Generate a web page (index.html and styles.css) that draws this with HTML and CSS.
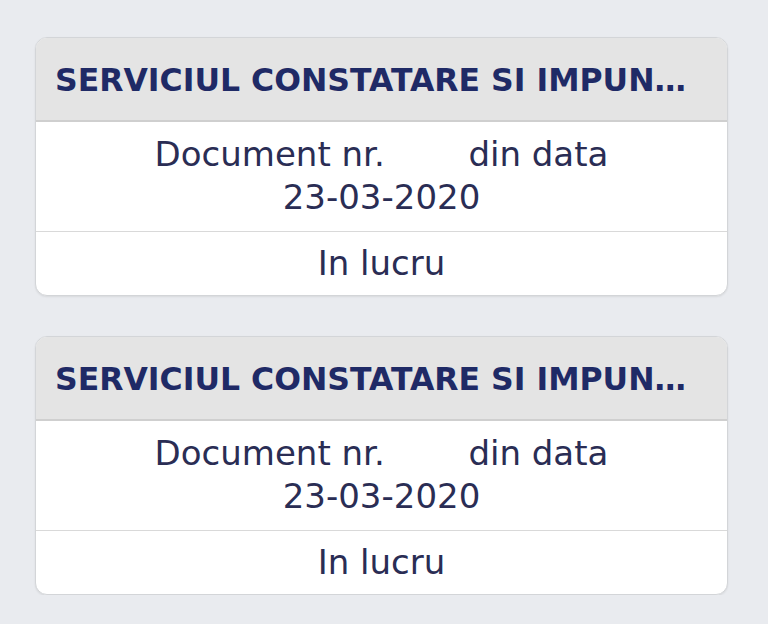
FILE: index.html
```html
<!DOCTYPE html>
<html lang="ro">
<head>
  <meta charset="UTF-8">
  <meta name="viewport" content="width=device-width, initial-scale=1.0">
  <title>Documente</title>
  <link rel="stylesheet" href="styles.css">
</head>
<body>
  <div class="doc-list">
    <div class="doc-card">
      <div class="doc-header">SERVICIUL CONSTATARE SI IMPUN…</div>
      <div class="doc-body">
        <div class="doc-line">Document nr. <span class="doc-nr"></span> din data</div>
        <div class="doc-line">23-03-2020</div>
      </div>
      <div class="doc-status">In lucru</div>
    </div>

    <div class="doc-card">
      <div class="doc-header">SERVICIUL CONSTATARE SI IMPUN…</div>
      <div class="doc-body">
        <div class="doc-line">Document nr. <span class="doc-nr"></span> din data</div>
        <div class="doc-line">23-03-2020</div>
      </div>
      <div class="doc-status">In lucru</div>
    </div>
  </div>
</body>
</html>
```

FILE: styles.css
```css
:root {
  --page-bg: #E9EBEF;
  --header-bg: #E4E4E4;
  --title-color: #1F2A66;
  --text-color: #2A2D54;
  --border-color: #D3D5D8;
  --line-color: #D9D9D9;
}

body {
  font-family: "DejaVu Sans", Verdana, sans-serif;
  margin: 0;
  padding: 0;
  background-color: var(--page-bg);
  color: var(--text-color);
}

.doc-list {
  display: flex;
  flex-direction: column;
  gap: 40px;
  padding: 37px 40px 0 35px;
}

.doc-card {
  background-color: #FFFFFF;
  border: 1px solid var(--border-color);
  border-radius: 12px;
  overflow: hidden;
  box-shadow: 0 1px 2px rgba(0,0,0,0.08);
}

.doc-header {
  background-color: var(--header-bg);
  border-bottom: 2px solid #CFCFCF;
  height: 82px;
  line-height: 84px;
  padding: 0 20px 0 19px;
  font-size: 31.5px;
  font-weight: bold;
  color: var(--title-color);
  white-space: nowrap;
}

.doc-body {
  padding: 11px 0 12px;
  text-align: center;
  font-size: 34px;
  line-height: 43px;
  border-bottom: 1px solid var(--line-color);
}

.doc-nr {
  display: inline-block;
  width: 62px;
}

.doc-status {
  height: 63px;
  line-height: 63px;
  text-align: center;
  font-size: 34px;
}
```
